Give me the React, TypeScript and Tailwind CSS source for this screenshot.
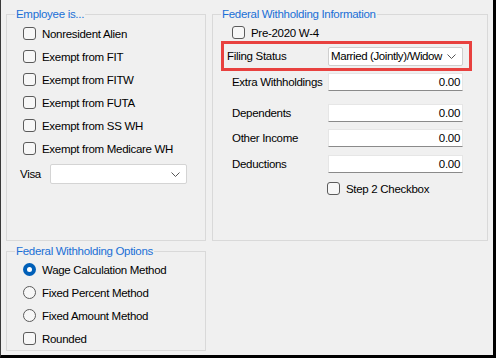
import React from 'react';

const font = { fontFamily: '"Liberation Sans", Arial, sans-serif' };

function Check({ label, className = '' }: { label: string; className?: string }) {
  return (
    <div className={`flex items-center gap-[6px] ${className}`}>
      <span className="w-[13px] h-[13px] rounded-[3px] border border-[#5b5b5b] bg-[#f7f7f7] shrink-0" />
      <span>{label}</span>
    </div>
  );
}

function Radio({ label, checked = false }: { label: string; checked?: boolean }) {
  return (
    <div className="flex items-center gap-[6px] h-[23px]">
      {checked ? (
        <span className="w-[13px] h-[13px] rounded-full bg-[#005fb8] flex items-center justify-center shrink-0">
          <span className="w-[5px] h-[5px] rounded-full bg-white" />
        </span>
      ) : (
        <span className="w-[13px] h-[13px] rounded-full border border-[#5b5b5b] bg-[#f7f7f7] shrink-0" />
      )}
      <span>{label}</span>
    </div>
  );
}

function Chevron() {
  return (
    <svg width="9" height="5" viewBox="0 0 9 5" className="shrink-0">
      <path d="M0.5 0.5 L4.5 4.5 L8.5 0.5" fill="none" stroke="#555" strokeWidth="1" />
    </svg>
  );
}

function Amount({ label, className = '' }: { label: string; className?: string }) {
  return (
    <div className={`flex items-center ml-[19px] ${className}`}>
      <span className="w-[96px]">{label}</span>
      <div className="w-[135px] h-[18px] bg-white border border-[#e6e6e6] border-b-[#8a8a8a] flex items-center justify-end pr-[2px]">
        0.00
      </div>
    </div>
  );
}

export default function App() {
  return (
    <div
      style={font}
      className="w-[496px] h-[358px] bg-[#f0f0f0] border-l border-l-[#3a3a3a] border-r-[3px] border-b-[3px] border-black text-[11.5px] tracking-[-0.3px] text-black flex gap-[6px] pl-[5px] pr-[5px] pt-[7px] leading-[14px]"
    >
      {/* left column */}
      <div className="flex flex-col gap-[3px] w-[200px]">
        <fieldset className="h-[234px] border border-[#d9d9d9]">
          <legend className="ml-[8px] px-[1px] text-[#1a6fd6]">Employee is...</legend>
          <div className="mt-[1px] pl-[16px]">
            <Check label="Nonresident Alien" className="h-[23px]" />
            <Check label="Exempt from FIT" className="h-[23px]" />
            <Check label="Exempt from FITW" className="h-[23px]" />
            <Check label="Exempt from FUTA" className="h-[23px]" />
            <Check label="Exempt from SS WH" className="h-[23px]" />
            <Check label="Exempt from Medicare WH" className="h-[23px]" />
            <div className="flex items-center mt-[4px] -ml-[3px]">
              <span className="w-[30px]">Visa</span>
              <div className="w-[137px] h-[20px] bg-white border border-[#d4d4d4] rounded-[2px] flex items-center justify-end pr-[6px]">
                <Chevron />
              </div>
            </div>
          </div>
        </fieldset>
        <fieldset className="h-[107px] border border-[#d9d9d9]">
          <legend className="ml-[8px] px-[1px] text-[#1a6fd6]">Federal Withholding Options</legend>
          <div className="pl-[16px]">
            <Radio label="Wage Calculation Method" checked />
            <Radio label="Fixed Percent Method" />
            <Radio label="Fixed Amount Method" />
            <Check label="Rounded" className="h-[23px]" />
          </div>
        </fieldset>
      </div>

      {/* right column */}
      <fieldset className="w-[276px] h-[234px] border border-[#d9d9d9]">
        <legend className="ml-[8px] px-[1px] text-[#1a6fd6]">Federal Withholding Information</legend>
        <Check label="Pre-2020 W-4" className="h-[17px] mt-[3px] ml-[19px]" />
        <div className="ml-[8px] w-[251px] h-[30px] border-[3px] border-[#e8413f] flex items-center pl-[3px]">
          <span className="w-[101px]">Filing Status</span>
          <div className="w-[135px] h-[19px] bg-white border border-[#cfcfcf] rounded-[2px] flex items-center justify-between pl-[2px] pr-[6px]">
            <span className="tracking-[-0.4px]">Married (Jointly)/Widow</span>
            <Chevron />
          </div>
        </div>
        <Amount label="Extra Withholdings" className="mt-[2px]" />
        <Amount label="Dependents" className="mt-[13px]" />
        <Amount label="Other Income" className="mt-[7px]" />
        <Amount label="Deductions" className="mt-[8px]" />
        <Check label="Step 2 Checkbox" className="h-[15px] mt-[8px] ml-[114px]" />
      </fieldset>
    </div>
  );
}
